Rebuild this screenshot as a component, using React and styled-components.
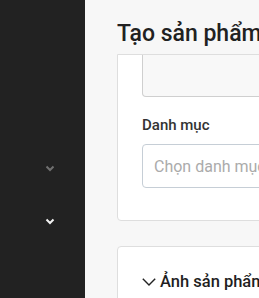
import React from 'react'
import styled, { createGlobalStyle } from 'styled-components'

const GlobalStyle = createGlobalStyle`
  html, body { margin: 0; padding: 0; }
  body { font-family: Roboto, "Noto Sans", Arial, sans-serif; background: #f7f7f7; overflow: hidden; }
`

const Layout = styled.div`
  display: flex;
  height: 100vh;
  overflow: hidden;
`

const Sidebar = styled.nav`
  flex: 0 0 85px;
  background: #222222;
  padding-top: 142px;
  box-sizing: border-box;
`

const NavRow = styled.div`
  height: 53px;
  display: flex;
  align-items: center;
  justify-content: flex-end;
  padding-right: 30px;
  color: ${p => (p.$active ? '#f2f2f2' : '#707070')};
`

const Main = styled.main`
  flex: 1;
  min-width: 0;
  padding-left: 32px;
  overflow: hidden;
`

const Content = styled.div`
  width: 640px;
`

const Title = styled.h1`
  margin: 0;
  padding: 20px 0 6px;
  font-size: 23px;
  line-height: 28px;
  font-weight: 500;
  color: #212121;
  white-space: nowrap;
`

const Card = styled.section`
  background: #fff;
  border: 1px solid #dedede;
  border-radius: ${p => (p.$cut ? '0 0 4px 4px' : '4px')};
  padding: ${p => (p.$cut ? '0 24px 32px' : '23px 24px 24px')};
  margin-bottom: 25px;
`

const TextareaTail = styled.div`
  height: 41px;
  background: #f8f8f8;
  border: 1px solid #cfcfcf;
  border-top: none;
  border-radius: 0 0 4px 4px;
`

const Label = styled.label`
  display: block;
  margin-top: 18px;
  font-size: 15px;
  line-height: 20px;
  font-weight: 500;
  color: #333;
`

const Select = styled.div`
  margin-top: 9px;
  height: 42px;
  border: 1px solid #c6ced6;
  border-radius: 4px;
  display: flex;
  align-items: center;
  padding-left: 11px;
  font-size: 16px;
  color: #ababab;
  white-space: nowrap;
`

const SectionHead = styled.div`
  display: flex;
  align-items: center;
  gap: 4px;
  font-size: 16.5px;
  line-height: 24px;
  font-weight: 500;
  color: #1f1f1f;
  white-space: nowrap;
`

const SmallChevron = () => (
  <svg width="10" height="7" viewBox="0 0 10 7" fill="none">
    <polyline points="1.5,1.5 5,5 8.5,1.5" stroke="currentColor" strokeWidth="2" />
  </svg>
)

const ThinChevron = () => (
  <svg width="14" height="8" viewBox="0 0 14 8" fill="none">
    <polyline points="0.8,0.8 7,7 13.2,0.8" stroke="#222" strokeWidth="1.4" />
  </svg>
)

export default function App() {
  return (
    <>
      <GlobalStyle />
      <Layout>
        <Sidebar>
          <NavRow><SmallChevron /></NavRow>
          <NavRow $active><SmallChevron /></NavRow>
        </Sidebar>
        <Main>
          <Content>
            <Title>Tạo sản phẩm mới</Title>
            <Card $cut>
              <TextareaTail />
              <Label>Danh mục</Label>
              <Select>Chọn danh mục</Select>
            </Card>
            <Card>
              <SectionHead><ThinChevron />Ảnh sản phẩm</SectionHead>
            </Card>
          </Content>
        </Main>
      </Layout>
    </>
  )
}
